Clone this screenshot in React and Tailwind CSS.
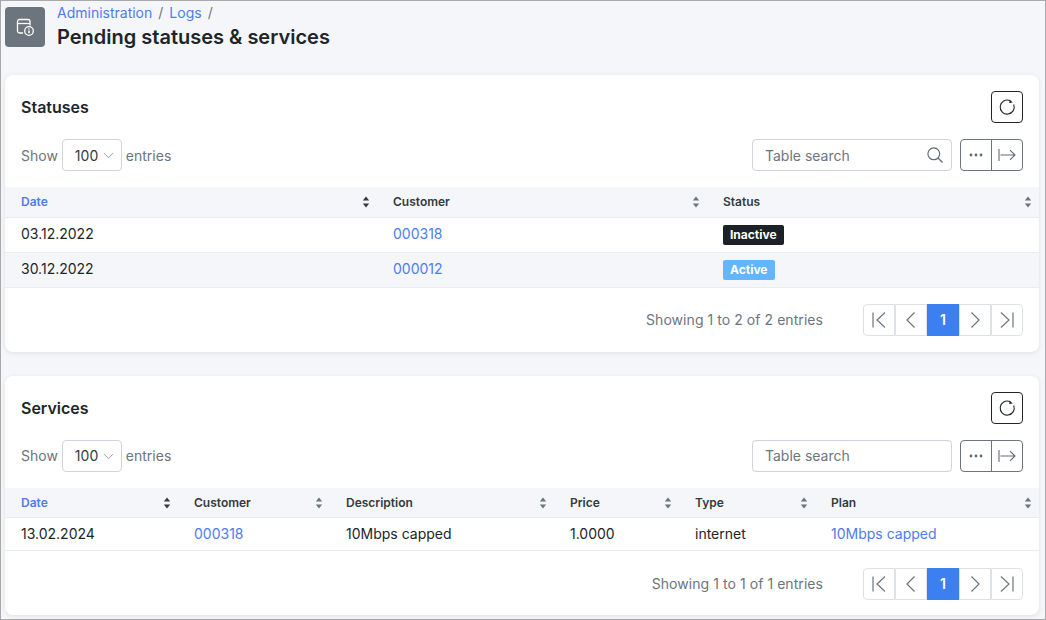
import { ChevronDown } from 'lucide-react'

const link = 'text-[#4d7cf0]'

function SortIcon({ active }) {
  return (
    <svg width="8" height="12" viewBox="0 0 8 12" className={active ? 'text-[#343a40]' : 'text-[#6c757d]'}>
      <path d="M4 .5 7.2 4.6H.8z M4 11.5.8 7.4h6.4z" fill="currentColor" />
    </svg>
  )
}

function WindowInfoIcon() {
  return (
    <svg width="20" height="20" viewBox="0 0 20 20" fill="none" stroke="white" strokeWidth="1.3">
      <path d="M8 16H4.500A2 2 0 0 1 2.500 14V4.500A2 2 0 0 1 4.500 2.500H13A2 2 0 0 1 15 4.500V8.500" />
      <path d="M2.500 6.500H15" />
      <circle cx="14" cy="14" r="4.300" />
      <path d="M14 13.500V16.300M14 11.500V12.500" strokeWidth="1.500" />
    </svg>
  )
}

function RefreshIcon() {
  return (
    <svg width="18" height="18" viewBox="0 0 18 18" fill="none" stroke="#212529" strokeWidth="1.1">
      <path d="M15.700 6.500A7 7 0 1 1 11.800 2.600" />
      <path d="M11.600 1.400 14.800 4.400 11.200 5z" fill="#212529" stroke="none" />
    </svg>
  )
}

function SearchIcon() {
  return (
    <svg width="16" height="16" viewBox="0 0 16 16" fill="none" stroke="#5f6b76" strokeWidth="1.2">
      <circle cx="6.800" cy="6.800" r="5.900" />
      <path d="M11 11 15.500 15.500" />
    </svg>
  )
}

function Toolbar({ withIcon, textClass }) {
  return (
    <div className="mt-4 flex h-8 items-center justify-between px-4">
      <div className="flex items-center text-[14px] text-[#6c757d]">
        <span className={textClass}>Show</span>
        <div className="mx-1 flex h-8 w-[60px] items-center rounded border border-[#ced4da] bg-white pl-3 text-[#343a40]">
          <span className={textClass}>100</span>
          <ChevronDown size={17} strokeWidth={1} className="ml-[2px] text-[#6c757d]" />
        </div>
        <span className={textClass}>entries</span>
      </div>
      <div className="flex items-center">
        <div className="flex h-8 w-[200px] items-center justify-between rounded border border-[#ced4da] bg-white pr-2 pl-3 text-[14px] text-[#6c757d]">
          <span className={textClass}>Table search</span>
          {withIcon && <SearchIcon />}
        </div>
        <div className="ml-2 flex h-8 w-[63px] rounded border border-[#6c757d] bg-white">
          <div className="flex w-[31px] items-center justify-center border-r border-[#6c757d]">
            <svg width="14" height="4" viewBox="0 0 14 4" fill="#5f6b76">
              <circle cx="2" cy="2" r="1.400" />
              <circle cx="7" cy="2" r="1.400" />
              <circle cx="12" cy="2" r="1.400" />
            </svg>
          </div>
          <div className="flex flex-1 items-center justify-center">
            <svg width="18" height="14" viewBox="0 0 18 14" fill="none" stroke="#5f6b76" strokeWidth="1.1">
              <path d="M1 1V13M2.500 7H17M12 2.200 17 7 12 11.800" />
            </svg>
          </div>
        </div>
      </div>
    </div>
  )
}

function PagerButton({ d, active, children }) {
  return (
    <div className={`flex h-8 w-8 items-center justify-center border first:rounded-l last:rounded-r ${active ? 'border-[#3b7ff0] bg-[#3b7ff0] text-[14px] font-semibold text-white' : 'border-[#dee2e6] bg-white'}`}>
      {d ? (
        <svg width="16" height="16" viewBox="0 0 16 16" fill="none" stroke="#6c757d" strokeWidth="1.2">
          <path d={d} />
        </svg>
      ) : children}
    </div>
  )
}

function Footer({ text, height }) {
  return (
    <div className={`flex items-center justify-end px-4 ${height}`}>
      <span className="mr-10 text-[14px] tracking-[0.06px] text-[#6c757d]">{text}</span>
      <div className="flex">
        <PagerButton d="M2 .5V15.500M14 .5 6 8 14 15.500" />
        <PagerButton d="M11.500 .5 4 8 11.500 15.500" />
        <PagerButton active>1</PagerButton>
        <PagerButton d="M4.500 .5 12 8 4.500 15.500" />
        <PagerButton d="M14 .5V15.500M2 .5 10 8 2 15.500" />
      </div>
    </div>
  )
}

function Card({ title, withIcon, textClass, className, children }) {
  return (
    <section className={`mr-[6px] ml-[4px] rounded-lg bg-white shadow-[0_1px_4px_rgba(33,37,41,0.1)] ${className}`}>
      <div className="flex items-center justify-between px-4 pt-4">
        <h2 className="text-[16px] leading-8 font-semibold text-[#212529]">{title}</h2>
        <div className="flex h-8 w-8 items-center justify-center rounded border border-[#212529]">
          <RefreshIcon />
        </div>
      </div>
      <Toolbar withIcon={withIcon} textClass={textClass} />
      {children}
    </section>
  )
}

function HeaderCell({ label, active, className }) {
  return (
    <th className={`border-b border-[#e9ecef] px-0 text-left font-semibold ${className}`}>
      <div className="flex items-center justify-between pr-[7px] pl-4">
        <span className={active ? link : 'text-[#343a40]'}>{label}</span>
        <SortIcon active={active} />
      </div>
    </th>
  )
}

export default function App() {
  return (
    <div className="h-[620px] w-[1046px] overflow-hidden border border-[#a9a9a9] bg-[#f5f6fa] font-['Inter',sans-serif] text-[#212529]">
      <header className="flex h-[74px] items-start pt-[5px] pl-[4px]">
        <div className="mt-px flex h-10 w-10 items-center justify-center rounded bg-[#6c757d]">
          <WindowInfoIcon />
        </div>
        <div className="ml-3">
          <div className="text-[14px] leading-[14px] text-[#6c757d]">
            <span className={link}>Administration</span>
            <span className="mx-[6px]">/</span>
            <span className={link}>Logs</span>
            <span className="mx-[6px]">/</span>
          </div>
          <h1 className="mt-[1px] text-[20px] leading-[32px] font-semibold text-[#212529]">Pending statuses &amp; services</h1>
        </div>
      </header>

      <Card title="Statuses" withIcon className="h-[277px]">
        <table className="mt-4 w-full table-fixed border-collapse text-[14px]">
          <thead className="bg-[#f5f6fa] text-[12px]">
            <tr className="h-[30px]">
              <HeaderCell label="Date" active className="w-[372px]" />
              <HeaderCell label="Customer" className="w-[330px]" />
              <HeaderCell label="Status" />
            </tr>
          </thead>
          <tbody>
            <tr className="h-[35px] border-b border-[#e9ecef]">
              <td className="pb-[2px] pl-4">03.12.2022</td>
              <td className={`pb-[2px] pl-4 ${link}`}>000318</td>
              <td className="pb-[2px] pl-4">
                <span className="inline-block rounded-[2px] bg-[#1b2126] px-[7px] text-[12px] leading-[20px] font-bold text-white">Inactive</span>
              </td>
            </tr>
            <tr className="h-[35px] border-b border-[#e9ecef] bg-[#f5f6fa]">
              <td className="pb-[2px] pl-4">30.12.2022</td>
              <td className={`pb-[2px] pl-4 ${link}`}>000012</td>
              <td className="pb-[2px] pl-4">
                <span className="inline-block rounded-[2px] bg-[#62b5ff] px-[7px] text-[12px] leading-[20px] font-bold text-white">Active</span>
              </td>
            </tr>
          </tbody>
        </table>
        <Footer text="Showing 1 to 2 of 2 entries" height="h-[64px]" />
      </Card>

      <Card title="Services" textClass="pb-[2px]" className="mt-6 h-[239px]">
        <table className="mt-4 w-full table-fixed border-collapse text-[14px]">
          <thead className="bg-[#f5f6fa] text-[12px]">
            <tr className="h-[29px]">
              <HeaderCell label="Date" active className="w-[173px] pt-[2px]" />
              <HeaderCell label="Customer" className="w-[152px] pt-[2px]" />
              <HeaderCell label="Description" className="w-[224px] pt-[2px]" />
              <HeaderCell label="Price" className="w-[125px] pt-[2px]" />
              <HeaderCell label="Type" className="w-[136px] pt-[2px]" />
              <HeaderCell label="Plan" className="pt-[2px]" />
            </tr>
          </thead>
          <tbody>
            <tr className="h-[33px] border-b border-[#e9ecef]">
              <td className="pl-4">13.02.2024</td>
              <td className={`pl-4 ${link}`}>000318</td>
              <td className="pl-4">10Mbps capped</td>
              <td className="pl-4">1.0000</td>
              <td className="pl-4">internet</td>
              <td className={`pl-4 ${link}`}>10Mbps capped</td>
            </tr>
          </tbody>
        </table>
        <Footer text="Showing 1 to 1 of 1 entries" height="h-[66px]" />
      </Card>
    </div>
  )
}
